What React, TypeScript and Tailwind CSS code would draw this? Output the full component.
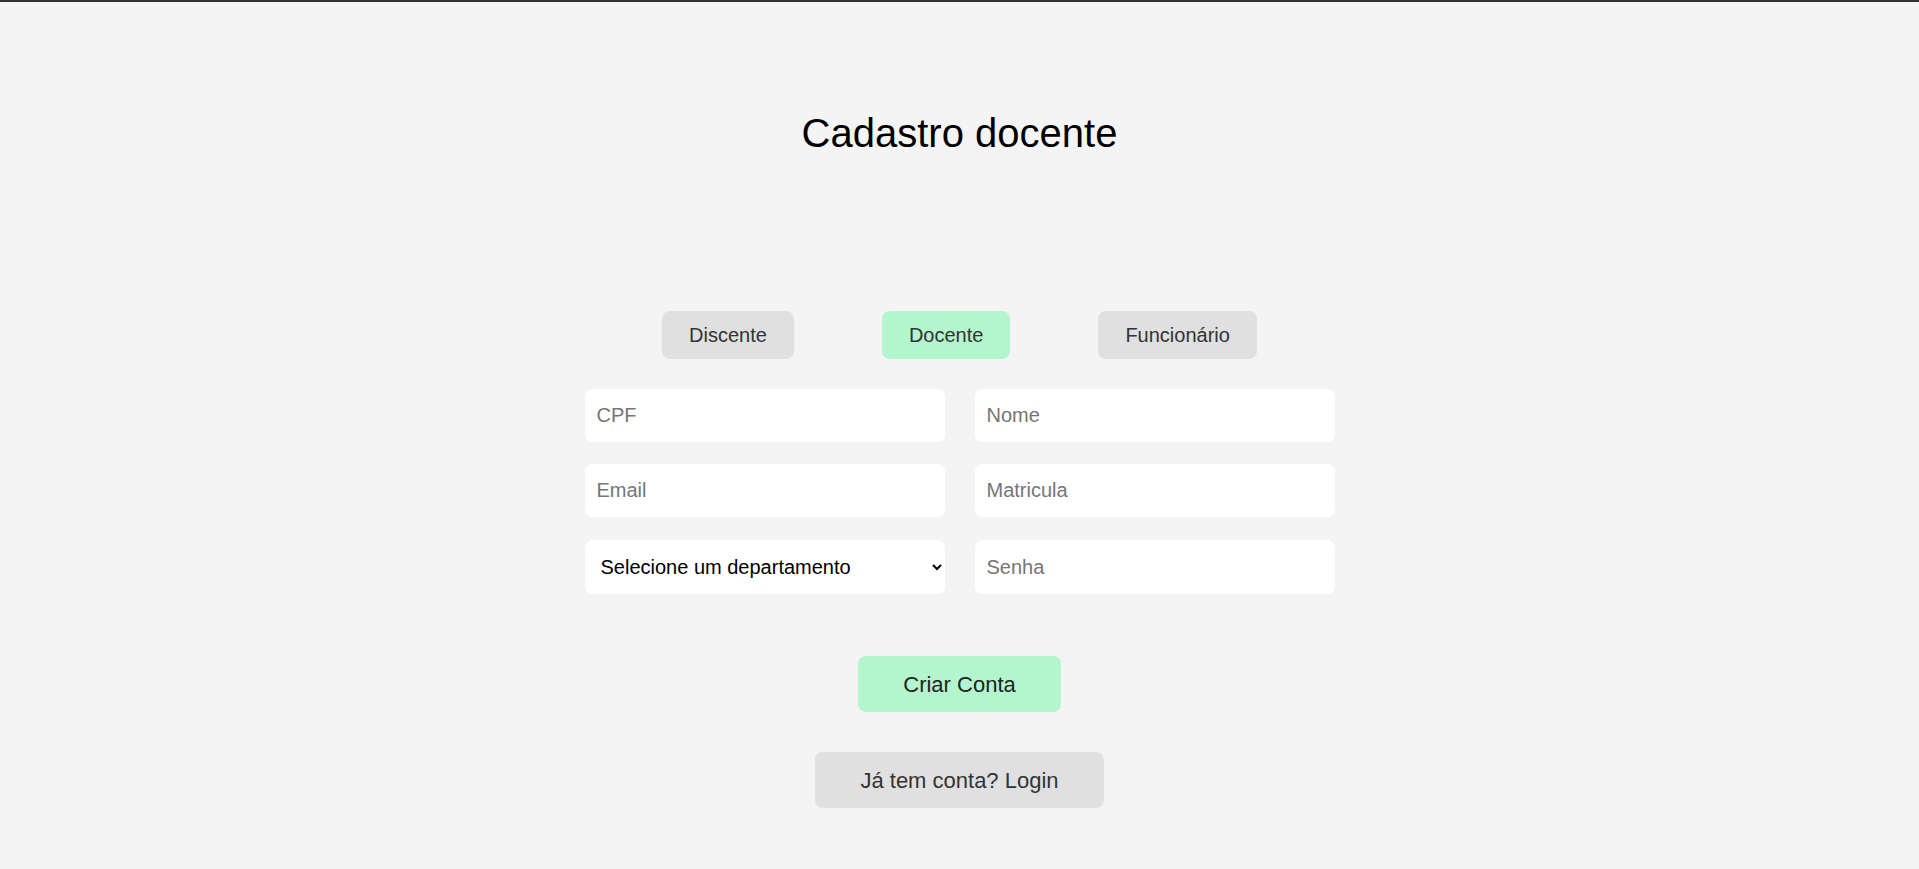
import { useState } from 'react';

const tabs = ['Discente', 'Docente', 'Funcionário'];

export default function App() {
  const [tipo, setTipo] = useState('Docente');

  return (
    <div
      className="min-h-screen bg-[#f4f4f4] border-t-2 border-[#333] flex flex-col items-center"
      style={{ fontFamily: '"Liberation Sans", Arial, sans-serif' }}
    >
      <h1 className="pt-[108px] text-[40px] leading-[46px] text-black font-normal">Cadastro docente</h1>

      <div className="mt-[155px] flex gap-[88px]">
        {tabs.map((t) => (
          <button
            key={t}
            onClick={() => setTipo(t)}
            className={
              'h-[48px] px-[27px] rounded-lg text-[20px] text-[#333] ' +
              (tipo === t ? 'bg-[#b3f5cd]' : 'bg-[#e0e0e0]')
            }
          >
            {t}
          </button>
        ))}
      </div>

      <form className="mt-[30px] flex flex-col items-center" onSubmit={(e) => e.preventDefault()}>
        <div className="grid grid-cols-[360px_360px] gap-x-[30px] gap-y-[22px]">
          <input
            autoFocus
            placeholder="CPF"
            className="h-[53px] rounded-lg bg-white px-3 text-[20px] text-black placeholder:text-[#757575] outline-none"
          />
          <input
            placeholder="Nome"
            className="h-[53px] rounded-lg bg-white px-3 text-[20px] text-black placeholder:text-[#757575] outline-none"
          />
          <input
            placeholder="Email"
            className="h-[53px] rounded-lg bg-white px-3 text-[20px] text-black placeholder:text-[#757575] outline-none"
          />
          <input
            placeholder="Matricula"
            className="h-[53px] rounded-lg bg-white px-3 text-[20px] text-black placeholder:text-[#757575] outline-none"
          />
          <select
            defaultValue=""
            className="mt-px h-[54px] rounded-lg bg-white px-3 text-[20px] text-black outline-none"
          >
            <option value="">Selecione um departamento</option>
            <option value="computacao">Computação</option>
            <option value="matematica">Matemática</option>
          </select>
          <input
            type="password"
            placeholder="Senha"
            className="mt-px h-[54px] rounded-lg bg-white px-3 text-[20px] text-black placeholder:text-[#757575] outline-none"
          />
        </div>

        <button
          type="submit"
          className="mt-[62px] h-[56px] px-[45px] rounded-lg bg-[#b3f5cd] text-[22px] text-[#222]"
        >
          Criar Conta
        </button>
      </form>

      <button className="mt-[40px] h-[56px] px-[45px] rounded-lg bg-[#e0e0e0] text-[22px] text-[#333]">
        Já tem conta? Login
      </button>
    </div>
  );
}
